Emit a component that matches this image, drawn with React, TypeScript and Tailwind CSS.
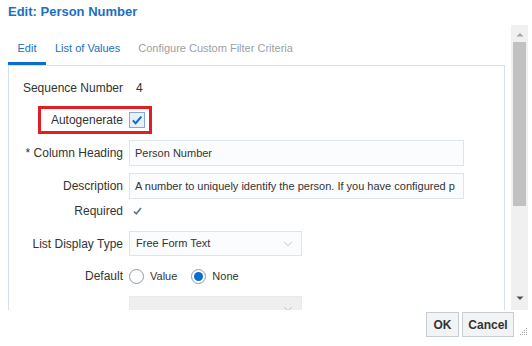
import { ChevronDown } from 'lucide-react'

const labelCls = 'w-[114px] shrink-0 text-right text-[12px] text-[#333]'

function Chevron() {
  return <ChevronDown size={14} strokeWidth={1.2} className="text-[#a7adb4]" />
}

function Radio({ checked }: { checked?: boolean }) {
  return (
    <span className="flex h-[15px] w-[15px] items-center justify-center rounded-full border border-[#8f9aa6] bg-white">
      {checked && <span className="h-[9px] w-[9px] rounded-full bg-[#0a6ed1]" />}
    </span>
  )
}

function App() {
  return (
    <div className="relative h-[346px] w-[532px] overflow-hidden bg-white font-['Liberation_Sans',Arial,sans-serif] text-[#333]">
      {/* Title */}
      <div className="h-[25px] pl-[8px] pt-[4px] text-[13px] font-bold leading-[15px] text-[#1c6fc2]">
        Edit: Person Number
      </div>

      <div className="flex h-[285px]">
        {/* Scrolling content */}
        <div className="w-[511px] overflow-hidden">
          {/* Tabs */}
          <div className="mt-[14px] flex h-[26px] pl-[8px] text-[11px]">
            <div className="flex w-[38px] flex-col items-center border-b-[3px] border-[#0a6ed1] pt-[1px] text-[#1c6fc2]">Edit</div>
            <div className="ml-[9px] pt-[1px] text-[#1c6fc2]">List of Values</div>
            <div className="ml-[18px] pt-[1px] text-[#9ba0a5]">Configure Custom Filter Criteria</div>
          </div>

          {/* Panel */}
          <div className="ml-[8px] h-[260px] w-[497px] border border-[#d7dfe6] pt-[10px]">
            <div className="flex h-[24px] items-center gap-[13px]">
              <span className={labelCls}>Sequence Number</span>
              <span className="text-[12px]">4</span>
            </div>

            <div className="relative mt-[6px] flex h-[28px] items-center gap-[6px]">
              <span className={labelCls}>Autogenerate</span>
              <span className="flex h-[16px] w-[16px] items-center justify-center border border-[#87a9d6] bg-[#e8f1fb]">
                <svg width="12" height="12" viewBox="0 0 12 12">
                  <path d="M1.8 6.4 L4.6 9.2 L10.4 2.6" fill="none" stroke="#0a6ed1" strokeWidth="2" />
                </svg>
              </span>
              <div className="absolute left-[29px] top-0 h-[28px] w-[114px] border-[3px] border-[#e11d26]" />
            </div>

            <div className="mt-[6px] flex h-[26px] items-center gap-[6px]">
              <span className={labelCls}>* Column Heading</span>
              <div className="flex h-[26px] w-[335px] items-center border border-[#dfe4e9] bg-[#fbfcfd] px-[5px] text-[11px]">
                Person Number
              </div>
            </div>

            <div className="mt-[7px] flex h-[26px] items-center gap-[6px]">
              <span className={labelCls}>Description</span>
              <div className="flex h-[26px] w-[335px] items-center border border-[#dfe4e9] bg-[#fbfcfd] px-[5px] text-[11px]">
                <span className="overflow-hidden whitespace-nowrap">A number to uniquely identify the person. If you have configured p</span>
              </div>
            </div>

            <div className="mt-[2px] flex h-[20px] items-center gap-[6px]">
              <span className={labelCls}>Required</span>
              <svg width="16" height="12" viewBox="0 0 16 12">
                <path d="M5 6.5 L7.3 8.8 L12 3" fill="none" stroke="#5b7190" strokeWidth="1.6" />
              </svg>
            </div>

            <div className="mt-[10px] flex h-[25px] items-center gap-[6px]">
              <span className={labelCls}>List Display Type</span>
              <div className="flex h-[25px] w-[173px] items-center justify-between border border-[#dfe4e9] bg-[#fbfcfd] pl-[6px] pr-[6px] text-[11px]">
                Free Form Text
                <Chevron />
              </div>
            </div>

            <div className="mt-[10px] flex h-[20px] items-center gap-[6px]">
              <span className={labelCls}>Default</span>
              <div className="flex items-center text-[11px]">
                <Radio />
                <span className="ml-[6px]">Value</span>
                <span className="ml-[14px]"><Radio checked /></span>
                <span className="ml-[6px]">None</span>
              </div>
            </div>

            <div className="mt-[10px] flex h-[25px] items-center gap-[6px]">
              <span className={labelCls}></span>
              <div className="flex h-[25px] w-[173px] items-center justify-end border border-[#e9eaeb] bg-[#efefef] pr-[6px]">
                <Chevron />
              </div>
            </div>
          </div>
        </div>

        {/* Scrollbar */}
        <div className="flex w-[17px] flex-col items-center bg-[#f0f0f0]">
          <svg width="10" height="14" viewBox="0 0 10 14" className="mt-[3px]">
            <path d="M1.5 8.5 L5 5 L8.5 8.5 Z" fill="#a3a3a3" />
          </svg>
          <div className="h-[164px] w-[13px] bg-[#c1c1c1]" />
          <div className="flex-1" />
          <svg width="10" height="14" viewBox="0 0 10 14" className="mb-[5px]">
            <path d="M1.5 5.5 L5 9 L8.5 5.5 Z" fill="#505050" />
          </svg>
        </div>
      </div>

      {/* Footer buttons */}
      <div className="mt-[2px] flex justify-end gap-[3px] pr-[18px]">
        <button className="h-[25px] w-[33px] border border-[#c6cdd4] bg-[#f2f3f4] text-[12px] font-bold text-[#333]">OK</button>
        <button className="h-[25px] w-[52px] border border-[#c6cdd4] bg-[#f2f3f4] text-[12px] font-bold text-[#333]">Cancel</button>
      </div>

      {/* Resize grip */}
      <svg width="9" height="9" viewBox="0 0 9 9" className="absolute bottom-[10px] right-[4px]">
        <rect x="7" y="1" width="1" height="1" fill="#b0b0b0" />
        <rect x="5" y="3" width="1" height="1" fill="#b0b0b0" />
        <rect x="7" y="3" width="1" height="1" fill="#b0b0b0" />
        <rect x="3" y="5" width="1" height="1" fill="#b0b0b0" />
        <rect x="5" y="5" width="1" height="1" fill="#b0b0b0" />
        <rect x="7" y="5" width="1" height="1" fill="#b0b0b0" />
        <rect x="1" y="7" width="1" height="1" fill="#b0b0b0" />
        <rect x="3" y="7" width="1" height="1" fill="#b0b0b0" />
        <rect x="5" y="7" width="1" height="1" fill="#b0b0b0" />
        <rect x="7" y="7" width="1" height="1" fill="#b0b0b0" />
      </svg>
    </div>
  )
}

export default App
